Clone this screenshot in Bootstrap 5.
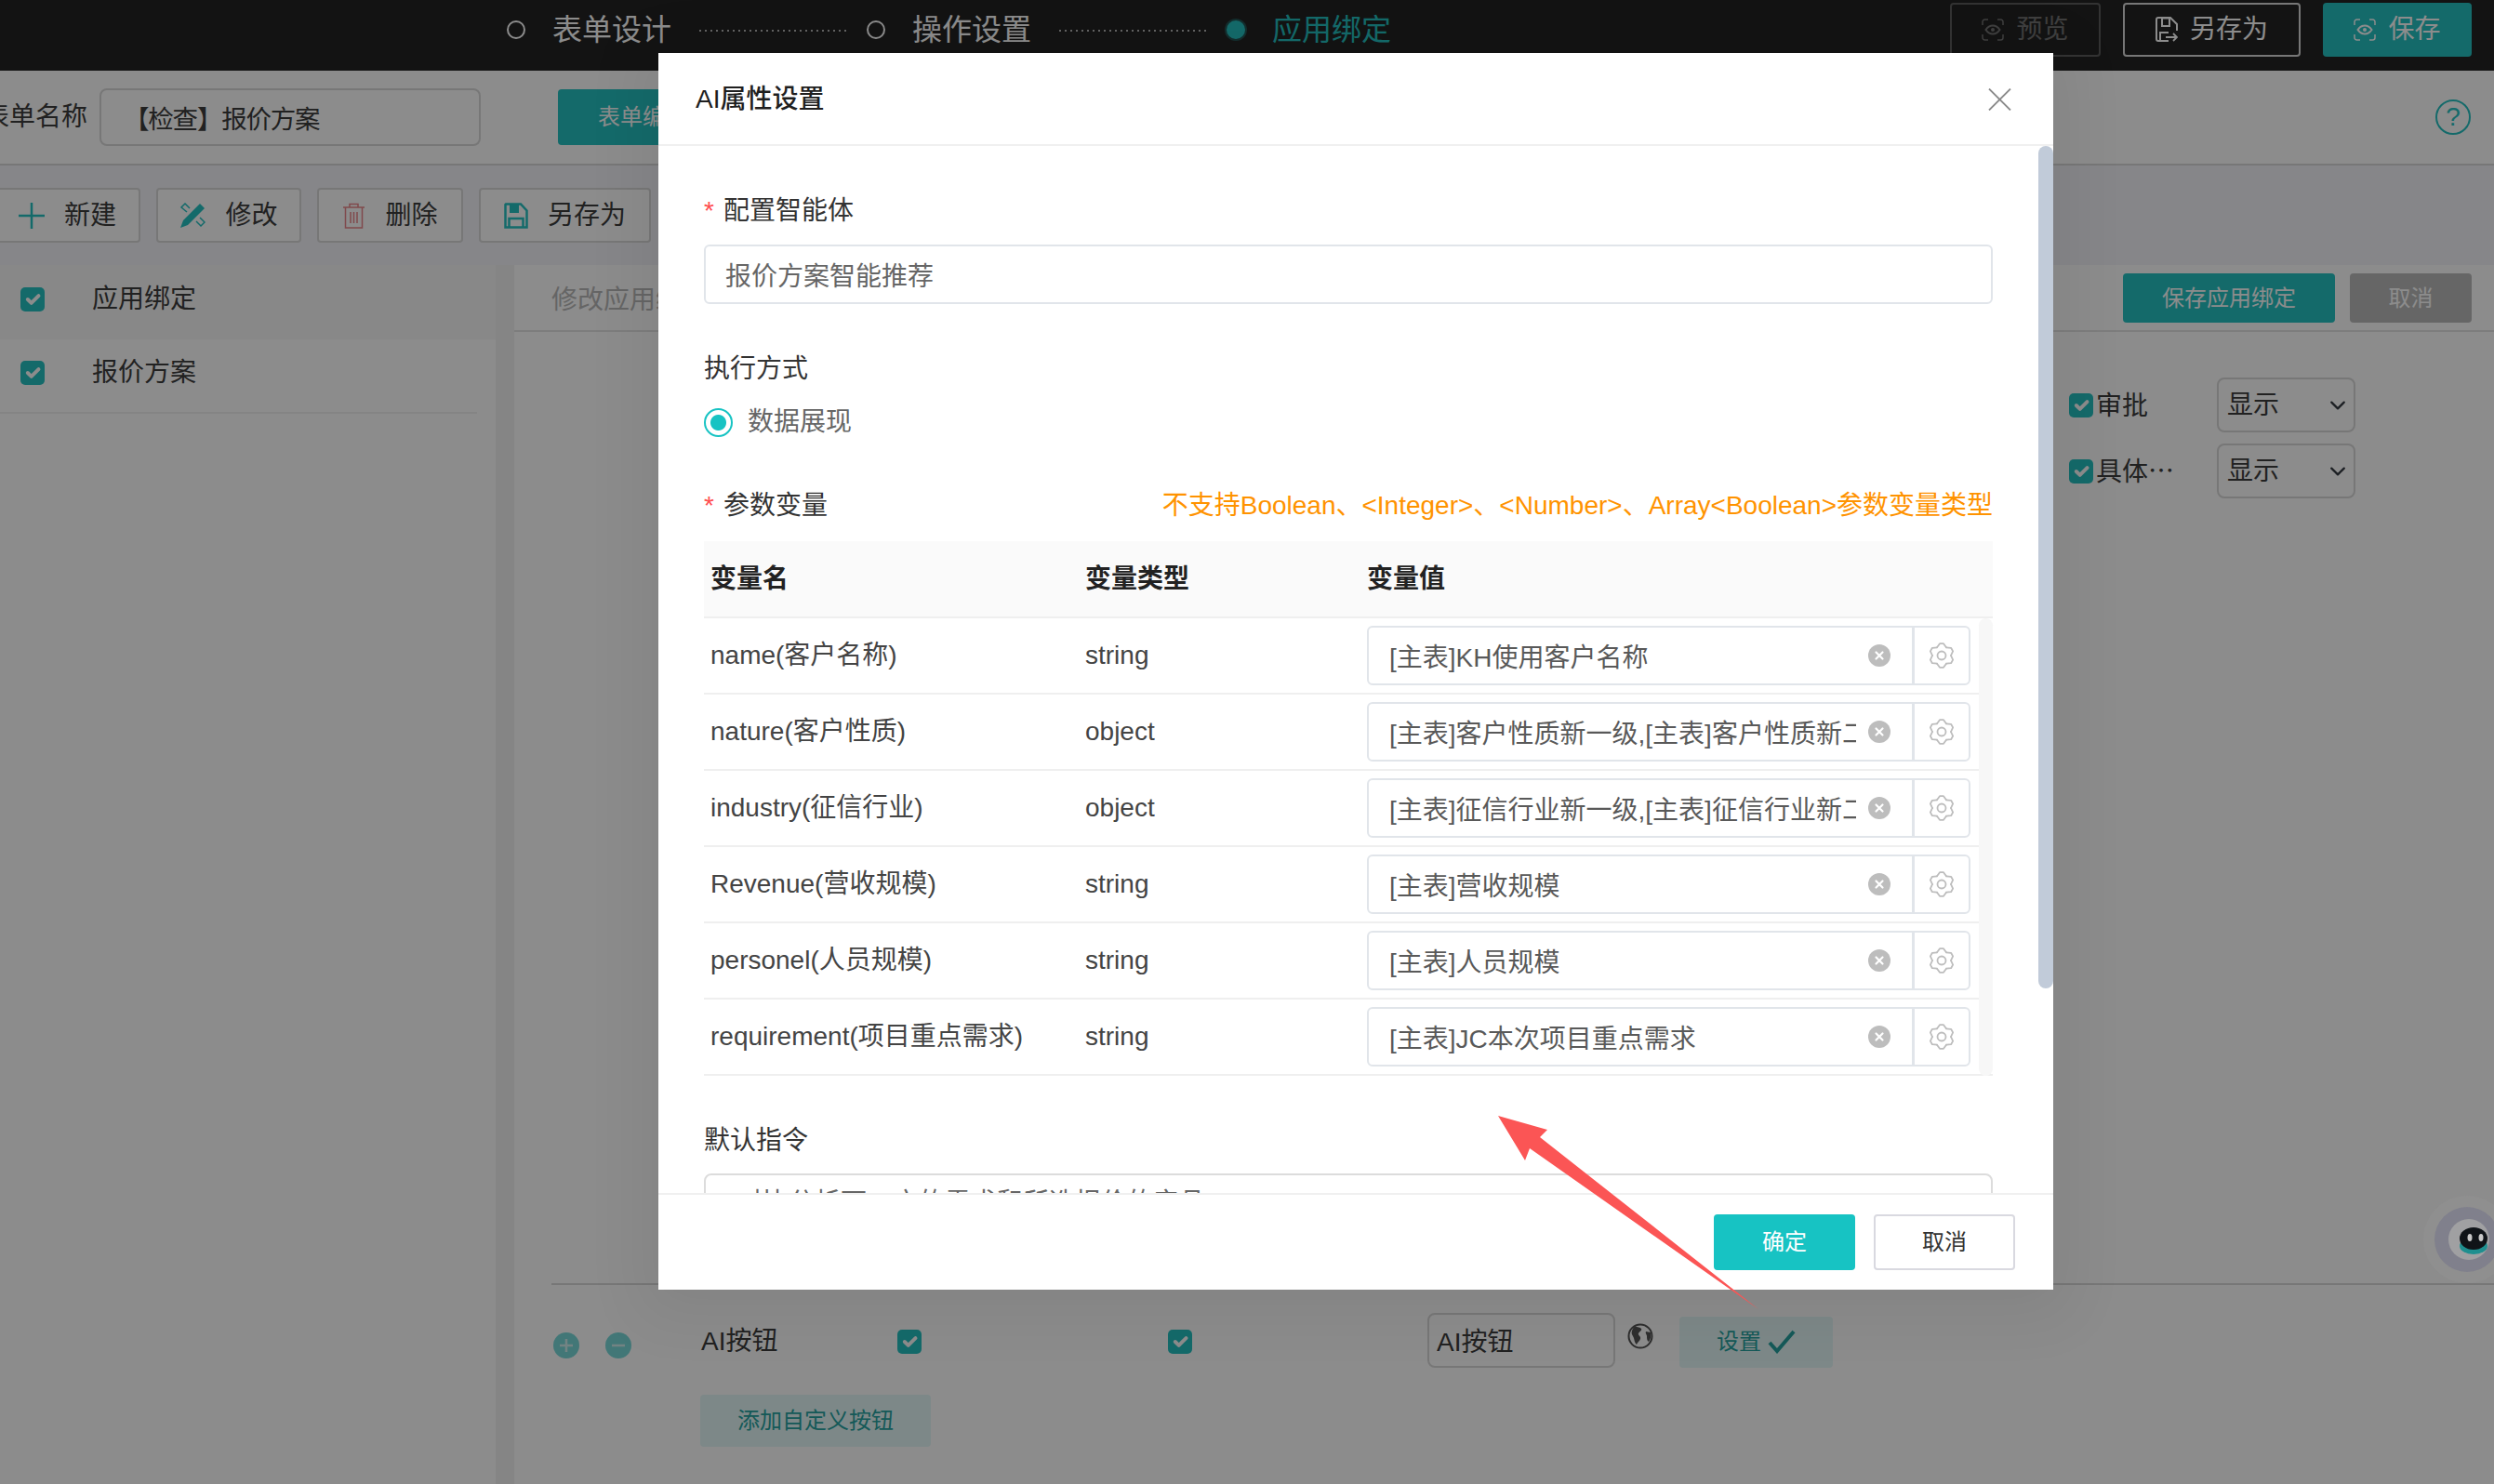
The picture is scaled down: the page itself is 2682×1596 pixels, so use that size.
<!DOCTYPE html>
<html lang="zh-CN">
<head>
  <meta charset="UTF-8">
  <meta name="viewport" content="width=device-width, initial-scale=1.0">
  <title>AI属性设置</title>
  <link href="https://cdn.jsdelivr.net/npm/bootstrap@5.3.3/dist/css/bootstrap.min.css" rel="stylesheet">

  <style>
    html, body {
      margin: 0;
      height: 100%;
      overflow: hidden;
      background: #fff;
      font-family: "Liberation Sans", "Noto Sans CJK SC", sans-serif;
      font-size: 28px;
      color: #3c3c3c;
    }

    .stage {
      position: relative;
      width: 2682px;
      height: 1596px;
      overflow: hidden;
    }

    /* top bar */
    .topbar {
      height: 76px;
      background: #242424;
      padding: 3px 24px 15px 0;
      color: #fff;
    }
    .step-ring {
      width: 20px;
      height: 20px;
      border: 2px solid #fff;
      border-radius: 50%;
      margin-right: 29px;
    }
    .step-on {
      width: 20px;
      height: 20px;
      border-radius: 50%;
      background: #26c2c2;
      box-shadow: 0 0 0 2px rgba(38, 194, 194, .3);
      margin-right: 29px;
    }
    .step-text { font-size: 32px; line-height: 1; }
    .step-dots {
      width: 160px;
      height: 2px;
      background: repeating-linear-gradient(90deg, #b5b5b5 0 2px, transparent 2px 6px);
      margin: 2px 20px 0 30px;
    }
    .top-btn {
      height: 58px;
      border-radius: 4px;
      border: 2px solid transparent;
      font-size: 28px;
      gap: 13px;
      padding: 0;
      color: #fff;
    }
    .top-dim { width: 162px; border-color: #5d5d5d; color: #737373; background: transparent; }
    .top-line { width: 191px; border-color: #d9d9d9; background: transparent; }
    .top-fill { width: 160px; background: #26c2c2; color: #fff; }

    /* form name row */
    .namebar {
      height: 102px;
      border-bottom: 2px solid #d9d9d9;
      padding-right: 25px;
    }
    .name-label { margin-left: -18px; margin-right: 13px; color: #3c3c3c; white-space: nowrap; }
    .name-input {
      width: 410px;
      height: 62px;
      border: 2px solid #d9d9d9;
      border-radius: 8px;
      padding: 0 24px;
      font-size: 27.5px;
      letter-spacing: -1.2px;
      color: #3c3c3c;
    }
    .edit-btn {
      width: 182px;
      height: 60px;
      margin-left: 83px;
      background: #26c2c2;
      color: #fff;
      border: 0;
      border-radius: 4px;
      font-size: 24px;
    }
    .help-mark {
      width: 38px;
      height: 38px;
      border: 2px solid #26c2c2;
      border-radius: 50%;
      color: #26c2c2;
      font-size: 28px;
      line-height: 34px;
      text-align: center;
    }

    /* toolbar */
    .toolrow {
      height: 107px;
      background: #f4f4f9;
      gap: 17px;
    }
    .tool-btn {
      height: 59px;
      background: #fff;
      border: 2px solid #d9d9d9;
      border-radius: 4px;
      padding: 0;
      gap: 21px;
      font-size: 28px;
      color: #3c3c3c;
      white-space: nowrap;
    }
    .tool-first { margin-left: -6px; width: 157px; }
    .tool-edit { width: 156px; }
    .tool-del { width: 157px; }
    .tool-save { width: 185px; }

    /* sidebar and panel */
    .sidepane { width: 533px; flex: none; background: #fff; }
    .side-item {
      height: 80px;
      padding: 0 0 6px 22px;
      gap: 51px;
      color: #3c3c3c;
    }
    .side-on { background: #f8f8f8; }
    .side-second { width: 513px; border-bottom: 2px solid #f0f0f0; }
    .gutter { width: 20px; flex: none; background: #f2f2f2; }
    .panel { flex: 1; min-width: 0; background: #fff; }
    .panel-head {
      height: 72px;
      border-bottom: 2px solid #e3e3e3;
      padding: 9px 24px 0 40px;
      gap: 16px;
    }
    .panel-tab { color: #b9b9b9; margin-top: 8px; margin-right: auto; }
    .save-bind, .cancel-bind {
      height: 53px;
      border: 0;
      border-radius: 4px;
      font-size: 24px;
      color: #fff;
    }
    .save-bind { width: 228px; background: #26c2c2; }
    .cancel-bind { width: 131px; background: #bababa; }
    .opt-rows {
      margin: 49px 149px 0 auto;
      width: 308px;
      gap: 12px;
    }
    .opt-row { height: 59px; }
    .opt-name { padding: 2px 0 0 3px; margin-right: auto; white-space: nowrap; }
    .chk.form-check-input {
      width: 26px;
      height: 26px;
      margin: 0;
      flex: none;
      border: 0;
      border-radius: 5px;
      background-color: #26c2c2;
    }
    .sel.form-select {
      width: 149px;
      flex: none;
      height: 59px;
      font-size: 28px;
      padding: 0 0 0 9px;
      border: 2px solid #d9d9d9;
      border-radius: 8px;
      color: #3c3c3c;
      background-size: 22px 18px;
      background-position: right 6px center;
    }
    .btn-line {
      margin: 844px 0 0 40px;
      border-top: 2px solid #d9d9d9;
    }
    .btn-grid {
      display: grid;
      grid-template-columns: 58px 103px 211px 291px 279px 215px 56px 165px;
      align-items: center;
      margin: 29px 0 0 40px;
      height: 60px;
    }
    .btn-grid > .chk.form-check-input { margin-top: 4px; }
    .btn-grid > .ai-name { margin-top: 3px; }
    .round-teal { margin: 12px 0 0 2px; display: block; }
    .round-minus { margin-left: 0; }
    .ai-input {
      width: 202px;
      height: 59px;
      border: 2px solid #d9d9d9;
      border-radius: 8px;
      padding: 0 8px;
      font-size: 28px;
      color: #3c3c3c;
    }
    .pale-btn {
      background: #e3f8f7;
      color: #27a3a1;
      border: 0;
      border-radius: 4px;
      font-size: 24px;
    }
    .set-btn { width: 165px; height: 55px; gap: 7px; margin-top: 4px; }
    .add-btn { display: block; width: 248px; height: 56px; margin: 29px 0 0 200px; }

    .robot { position: absolute; left: 2600px; top: 1282px; }

    /* dimming layer + dialog */
    .dim-layer {
      position: absolute;
      inset: 0;
      background: rgba(0, 0, 0, .45);
    }
    .dlg.modal-content {
      position: absolute;
      left: 708px;
      top: 57px;
      width: 1500px;
      height: 1330px;
      background: #fff;
      border: 0;
      border-radius: 0;
      box-shadow: 0 10px 60px 20px rgba(0, 0, 0, .06);
      color: #333;
      font-size: 28px;
    }
    .dlg .modal-header {
      height: 100px;
      flex: none;
      padding: 2px 45px 0 40px;
      border-bottom: 2px solid #f0f0f0;
      border-radius: 0;
    }
    .dlg-title { font-size: 28px; font-weight: 500; color: #1f1f1f; margin: 0; line-height: 1; }
    .dlg-close { background: none; border: 0; padding: 0; line-height: 0; }
    .dlg .modal-body {
      padding: 48px 65px 0 49px;
      overflow: hidden;
      min-height: 0;
    }
    .dlg .modal-footer {
      height: 104px;
      flex: none;
      padding: 0 41px 0 0;
      gap: 20px;
      border-top: 2px solid #f0f0f0;
      border-radius: 0;
    }
    .dlg .modal-footer > * { margin: 0; }
    .ok-btn, .no-btn {
      width: 152px;
      height: 60px;
      border-radius: 4px;
      font-size: 24px;
      padding: 0;
    }
    .ok-btn { background: #17c3c3; color: #fff; border: 0; }
    .no-btn { background: #fff; color: #333; border: 2px solid #d9d9e0; }
    .lbl { height: 40px; padding-top: 3px; line-height: 37px; color: #333; }
    .req { color: #ff4d4f; margin-right: 10px; }
    .gap-a { margin-top: 48px; }
    .fld.form-control {
      height: 64px;
      margin-top: 18px;
      padding: 0 21px;
      font-size: 28px;
      color: #666;
      border: 2px solid #e1e5ea;
      border-radius: 6px;
    }
    .radio-line { margin-top: 19px; height: 40px; gap: 16px; color: #666; }
    .rad.form-check-input {
      width: 31px;
      height: 31px;
      margin: 0;
      border: 2px solid #17c3c3;
      background: radial-gradient(circle, #17c3c3 0 8px, #fff 9px);
    }
    .warn-text { color: #ff9300; }
    .var-wrap { position: relative; margin-top: 20px; }
    .var-table {
      table-layout: fixed;
      width: 1386px;
      margin: 0;
      font-size: 28px;
    }
    .var-table th, .var-table td {
      height: 82px;
      padding: 0 0 0 7px;
      vertical-align: middle;
      border-bottom: 2px solid #efefef;
      color: #444;
      white-space: nowrap;
    }
    .var-table th { background: #fafafa; color: #222; font-weight: 600; }
    .var-track {
      position: absolute;
      left: 1371px;
      top: 83px;
      width: 15px;
      height: 492px;
      border-radius: 8px;
      background: #f7f7f7;
    }
    .val-group { width: 649px; position: relative; flex-wrap: nowrap; }
    .val-group .form-control {
      height: 64px;
      font-size: 28px;
      color: #595959;
      padding: 0 60px 0 22px;
      border: 2px solid #e1e5ea;
      border-radius: 6px 0 0 6px;
    }
    .val-group .input-group-text {
      width: 62px;
      padding: 0;
      justify-content: center;
      background: #fff;
      border: 2px solid #e1e5ea;
      border-radius: 0 6px 6px 0;
    }
    .val-clear { position: absolute; left: 540px; top: 20px; z-index: 6; }
    .prompt-box.form-control {
      margin-top: 17px;
      height: 140px;
      padding: 9px 22px;
      font-size: 28px;
      color: #666;
      border: 2px solid #dcdcdc;
      border-radius: 8px;
    }
    .dlg-thumb {
      position: absolute;
      left: 1484px;
      top: 100px;
      width: 16px;
      height: 906px;
      background: #c1cbd9;
      border-radius: 8px;
    }
    .mark-arrow { position: absolute; left: 0; top: 0; pointer-events: none; }
  </style>
</head>
<body>

<svg width="0" height="0" class="position-absolute">
  <symbol id="ic-scan" viewBox="0 0 24 24">
    <path d="M7 1H3.500A2.500 2.500 0 0 0 1 3.500V7M17 1h3.500A2.500 2.500 0 0 1 23 3.500V7M7 23H3.500A2.500 2.500 0 0 1 1 20.500V17M17 23h3.500a2.500 2.500 0 0 0 2.500-2.500V17" fill="none" stroke="currentColor" stroke-width="1.500"/>
    <path d="M4.500 12s3-4.500 7.500-4.500 7.500 4.500 7.500 4.500-3 4.500-7.500 4.500S4.500 12 4.500 12z" fill="none" stroke="currentColor" stroke-width="2"/>
    <circle cx="12" cy="12" r="2" fill="currentColor"/>
  </symbol>
  <symbol id="ic-saveas" viewBox="0 0 24 28">
    <path d="M14 26H3a2 2 0 0 1-2-2V3a2 2 0 0 1 2-2h13l7 7v7" fill="none" stroke="currentColor" stroke-width="2"/>
    <path d="M7 1.500h8V10H7zM5 26v-9h9" fill="none" stroke="currentColor" stroke-width="2"/>
    <path d="M11 22h12M19 18l4 4-4 4" fill="none" stroke="currentColor" stroke-width="1.800"/>
  </symbol>
  <symbol id="ic-gear" viewBox="-14 -14 28 28">
    <g fill="none" stroke="#bdbdbd" stroke-width="1.800" stroke-linejoin="round" stroke-linecap="round">
      <path d="M5-8.660L2.030-12.840H-2.030L-5-8.660"/>
      <path transform="rotate(60)" d="M5-8.660L2.030-12.840H-2.030L-5-8.660"/>
      <path transform="rotate(120)" d="M5-8.660L2.030-12.840H-2.030L-5-8.660"/>
      <path transform="rotate(180)" d="M5-8.660L2.030-12.840H-2.030L-5-8.660"/>
      <path transform="rotate(240)" d="M5-8.660L2.030-12.840H-2.030L-5-8.660"/>
      <path transform="rotate(300)" d="M5-8.660L2.030-12.840H-2.030L-5-8.660"/>
      <circle r="4.500"/>
    </g>
  </symbol>
  <symbol id="ic-clear" viewBox="0 0 24 24">
    <circle cx="12" cy="12" r="12" fill="#bdbdbd"/>
    <path d="M8.500 8.500l7 7M15.500 8.500l-7 7" stroke="#fff" stroke-width="2.200" stroke-linecap="round"/>
  </symbol>
</svg>

<div class="stage">

  <div class="topbar d-flex align-items-center" style="padding-left:545px">
    <span class="step-ring"></span>
    <span class="step-text">表单设计</span>
    <span class="step-dots"></span>
    <span class="step-ring"></span>
    <span class="step-text">操作设置</span>
    <span class="step-dots"></span>
    <span class="step-on"></span>
    <span class="step-text" style="color:#26c2c2">应用绑定</span>
    <div class="ms-auto d-flex" style="gap:24px">
      <button class="btn top-btn top-dim d-flex align-items-center justify-content-center">
        <svg width="24" height="24"><use href="#ic-scan"/></svg>预览
      </button>
      <button class="btn top-btn top-line d-flex align-items-center justify-content-center">
        <svg width="24" height="28"><use href="#ic-saveas"/></svg>另存为
      </button>
      <button class="btn top-btn top-fill d-flex align-items-center justify-content-center">
        <svg width="24" height="24"><use href="#ic-scan"/></svg>保存
      </button>
    </div>
  </div>

  <div class="namebar d-flex align-items-center">
    <span class="name-label">表单名称</span>
    <input class="name-input" value="【检查】报价方案">
    <button class="edit-btn">表单编辑</button>
    <span class="help-mark ms-auto">?</span>
  </div>

  <div class="toolrow d-flex align-items-center">
    <button class="btn tool-btn tool-first d-flex align-items-center justify-content-center">
      <svg width="28" height="28" viewBox="0 0 28 28"><path d="M14 0v28M0 14h28" stroke="#26c2c2" stroke-width="2.500"/></svg>新建
    </button>
    <button class="btn tool-btn tool-edit d-flex align-items-center justify-content-center">
      <svg width="28" height="28" viewBox="0 0 28 28">
        <path d="M22 1l5 5L9 24l-8 3 3-8z" fill="#26c2c2"/>
        <path d="M8 10L2 5l4-4 5 5M18 20l5 5 4-4-5-5" fill="none" stroke="#26c2c2" stroke-width="1.500"/>
      </svg>修改
    </button>
    <button class="btn tool-btn tool-del d-flex align-items-center justify-content-center">
      <svg width="25" height="28" viewBox="0 0 25 28" fill="none" stroke="#e9868a" stroke-width="1.500">
        <path d="M1 5h23M8 5V1.500h9V5M3.500 5v22h18V5M9 10v12M12.500 10v12M16 10v12"/>
      </svg>删除
    </button>
    <button class="btn tool-btn tool-save d-flex align-items-center justify-content-center">
      <svg width="26" height="28" viewBox="0 0 26 28">
        <path d="M2 1.500h16l6.500 7V26.500H1.500V2z" fill="none" stroke="#26c2c2" stroke-width="2.500"/>
        <path d="M6 1h10v10H6z" fill="#26c2c2"/>
        <path d="M5.500 26v-9h15v9" fill="none" stroke="#26c2c2" stroke-width="2.500"/>
      </svg>另存为
    </button>
  </div>

  <div class="d-flex" style="height:1311px">
    <div class="sidepane">
      <div class="side-item side-on d-flex align-items-center">
        <input class="form-check-input chk" type="checkbox" checked>应用绑定
      </div>
      <div class="side-item side-second d-flex align-items-center">
        <input class="form-check-input chk" type="checkbox" checked>报价方案
      </div>
    </div>
    <div class="gutter"></div>
    <div class="panel">
      <div class="panel-head d-flex align-items-start">
        <span class="panel-tab">修改应用绑定</span>
        <button class="save-bind">保存应用绑定</button>
        <button class="cancel-bind">取消</button>
      </div>
      <div class="opt-rows d-flex flex-column">
        <div class="opt-row d-flex align-items-center">
          <input class="form-check-input chk" type="checkbox" checked>
          <span class="opt-name">审批</span>
          <select class="form-select sel"><option>显示</option></select>
        </div>
        <div class="opt-row d-flex align-items-center">
          <input class="form-check-input chk" type="checkbox" checked>
          <span class="opt-name">具体⋯</span>
          <select class="form-select sel"><option>显示</option></select>
        </div>
      </div>
      <div class="btn-line"></div>
      <div class="btn-grid">
        <svg class="round-teal" width="28" height="28" viewBox="0 0 28 28"><circle cx="14" cy="14" r="14" fill="#26c2c2" opacity=".62"/><path d="M14 7v14M7 14h14" stroke="#cfeeee" stroke-width="2.500"/></svg>
        <svg class="round-teal round-minus" width="28" height="28" viewBox="0 0 28 28"><circle cx="14" cy="14" r="14" fill="#26c2c2" opacity=".62"/><path d="M7 14h14" stroke="#cfeeee" stroke-width="2.500"/></svg>
        <span class="ai-name">AI按钮</span>
        <input class="form-check-input chk" type="checkbox" checked>
        <input class="form-check-input chk" type="checkbox" checked>
        <input class="ai-input" value="AI按钮">
        <svg width="28" height="28" viewBox="0 0 28 28" style="margin:-8px 0 0 0">
          <circle cx="14" cy="14" r="12.500" fill="#fff" stroke="#555" stroke-width="2"/>
          <path d="M8 3c3 2 6 1 7 3s-2 3-3 5 3 3 2 6-3 3-4 6c-3-3-2-6-4-9S4 8 8 3zM20 9l5 1c1 4 0 7-2 10-2-1-2-4-2-6s-2-3-1-5z" fill="#555"/>
        </svg>
        <button class="pale-btn set-btn d-flex align-items-center justify-content-center">设置
          <svg width="30" height="26" viewBox="0 0 30 26"><path d="M2 14l8 9L28 2" fill="none" stroke="#27a3a1" stroke-width="4"/></svg>
        </button>
      </div>
      <button class="pale-btn add-btn">添加自定义按钮</button>
    </div>
  </div>

  <div class="dim-layer"></div>

  <svg class="robot" width="82" height="102" viewBox="0 0 82 102">
    <circle cx="53" cy="51" r="47" fill="#8f8f8f"/>
    <circle cx="53" cy="51" r="35" fill="#80808c"/>
    <circle cx="55" cy="51" r="22" fill="#a0a0a2"/>
    <ellipse cx="60" cy="58" rx="15" ry="9" fill="#1f8f8f"/>
    <ellipse cx="60" cy="50" rx="15" ry="12" fill="#101418"/>
    <ellipse cx="56" cy="49" rx="2.500" ry="4" fill="#c8c8c8"/>
    <ellipse cx="68" cy="49" rx="2.500" ry="4" fill="#c8c8c8"/>
  </svg>

  <div class="dlg modal-content">
    <div class="modal-header d-flex align-items-center justify-content-between">
      <h5 class="dlg-title">AI属性设置</h5>
      <button class="dlg-close" type="button" aria-label="关闭">
        <svg width="25" height="24" viewBox="0 0 25 24"><path d="M1 .5l23 23M24 .5l-23 23" stroke="#8a8a8a" stroke-width="1.800"/></svg>
      </button>
    </div>
    <div class="modal-body">
      <div class="lbl"><span class="req">*</span>配置智能体</div>
      <input class="form-control fld" value="报价方案智能推荐">

      <div class="lbl gap-a">执行方式</div>
      <div class="radio-line d-flex align-items-center">
        <input class="form-check-input rad" type="radio" checked>
        <span>数据展现</span>
      </div>

      <div class="lbl gap-a d-flex justify-content-between">
        <span><span class="req">*</span>参数变量</span>
        <span class="warn-text">不支持Boolean、&lt;Integer&gt;、&lt;Number&gt;、Array&lt;Boolean&gt;参数变量类型</span>
      </div>

      <div class="var-wrap">
        <table class="table var-table">
          <colgroup><col style="width:403px"><col style="width:303px"><col></colgroup>
          <thead>
            <tr><th>变量名</th><th>变量类型</th><th>变量值</th></tr>
          </thead>
          <tbody>
            <tr>
              <td>name(客户名称)</td><td>string</td>
              <td><div class="input-group val-group">
                <input class="form-control" value="[主表]KH使用客户名称">
                <svg class="val-clear" width="24" height="24"><use href="#ic-clear"/></svg>
                <span class="input-group-text"><svg width="28" height="28"><use href="#ic-gear"/></svg></span>
              </div></td>
            </tr>
            <tr>
              <td>nature(客户性质)</td><td>object</td>
              <td><div class="input-group val-group">
                <input class="form-control" value="[主表]客户性质新一级,[主表]客户性质新二级">
                <svg class="val-clear" width="24" height="24"><use href="#ic-clear"/></svg>
                <span class="input-group-text"><svg width="28" height="28"><use href="#ic-gear"/></svg></span>
              </div></td>
            </tr>
            <tr>
              <td>industry(征信行业)</td><td>object</td>
              <td><div class="input-group val-group">
                <input class="form-control" value="[主表]征信行业新一级,[主表]征信行业新二级">
                <svg class="val-clear" width="24" height="24"><use href="#ic-clear"/></svg>
                <span class="input-group-text"><svg width="28" height="28"><use href="#ic-gear"/></svg></span>
              </div></td>
            </tr>
            <tr>
              <td>Revenue(营收规模)</td><td>string</td>
              <td><div class="input-group val-group">
                <input class="form-control" value="[主表]营收规模">
                <svg class="val-clear" width="24" height="24"><use href="#ic-clear"/></svg>
                <span class="input-group-text"><svg width="28" height="28"><use href="#ic-gear"/></svg></span>
              </div></td>
            </tr>
            <tr>
              <td>personel(人员规模)</td><td>string</td>
              <td><div class="input-group val-group">
                <input class="form-control" value="[主表]人员规模">
                <svg class="val-clear" width="24" height="24"><use href="#ic-clear"/></svg>
                <span class="input-group-text"><svg width="28" height="28"><use href="#ic-gear"/></svg></span>
              </div></td>
            </tr>
            <tr>
              <td>requirement(项目重点需求)</td><td>string</td>
              <td><div class="input-group val-group">
                <input class="form-control" value="[主表]JC本次项目重点需求">
                <svg class="val-clear" width="24" height="24"><use href="#ic-clear"/></svg>
                <span class="input-group-text"><svg width="28" height="28"><use href="#ic-gear"/></svg></span>
              </div></td>
            </tr>
          </tbody>
        </table>
        <div class="var-track"></div>
      </div>

      <div class="lbl gap-a">默认指令</div>
      <div class="form-control prompt-box">*对比分析下，方的需求和所选报价的产品</div>
    </div>
    <div class="modal-footer">
      <button class="ok-btn">确定</button>
      <button class="no-btn">取消</button>
    </div>
    <div class="dlg-thumb"></div>
  </div>

  <svg class="mark-arrow" width="2682" height="1596" viewBox="0 0 2682 1596">
    <polygon points="1611,1200 1664,1215 1656,1223 1891,1408 1645,1235 1640,1248" fill="#fb5555"/>
  </svg>
</div>

<script src="https://cdn.jsdelivr.net/npm/bootstrap@5.3.3/dist/js/bootstrap.bundle.min.js"></script>
</body>
</html>
